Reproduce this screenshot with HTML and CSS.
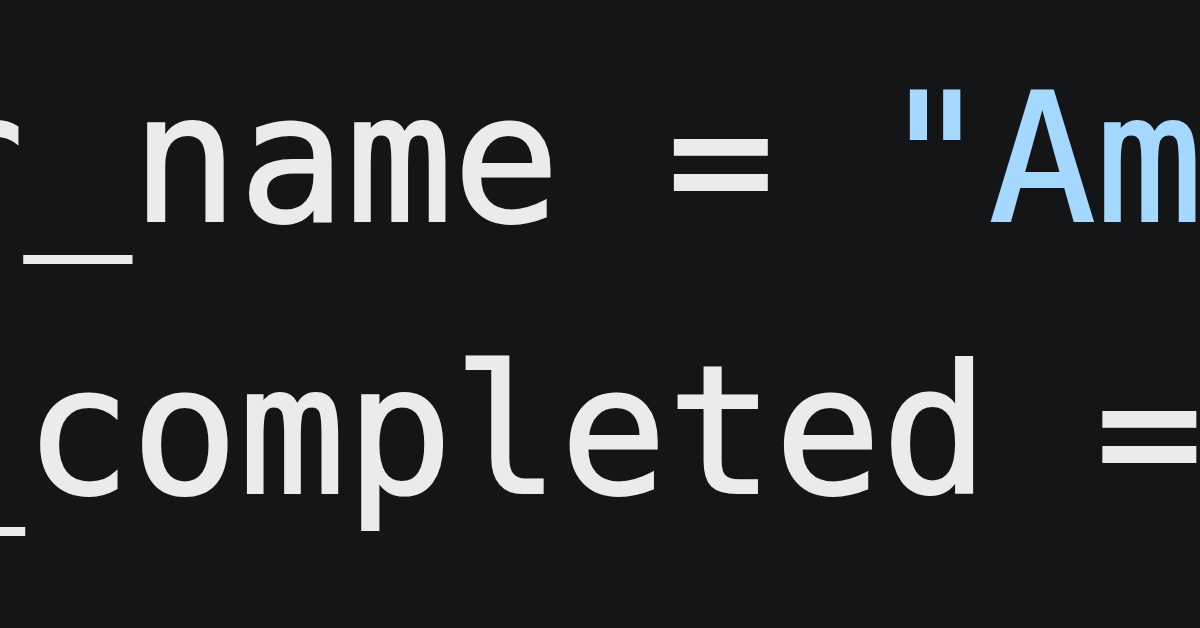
FILE: index.html
```html
<!DOCTYPE html>
<html lang="en">
<head>
<meta charset="utf-8">
<title>Code</title>
<link rel="stylesheet" href="styles.css">
</head>
<body>
<main class="editor">
  <div class="code">
    <div class="line"><span class="ident">r_name</span> <span class="op">=</span> <span class="str">"Amy"</span></div>
    <div class="line"><span class="ident">_completed</span> <span class="op">=</span> <span class="kw">True</span></div>
  </div>
</main>
</body>
</html>
```
FILE: styles.css
```css
html, body {
  margin: 0;
  padding: 0;
  width: 1200px;
  height: 628px;
  overflow: hidden;
  background: #141517;
}
.editor {
  width: 1200px;
  height: 628px;
  overflow: hidden;
  background: #141517;
  padding-top: 24px;
  box-sizing: border-box;
}
.code {
  margin-left: -83px;
  font-family: "DejaVu Sans Mono", "Liberation Mono", monospace;
  font-size: 178px;
  line-height: 272px;
  color: #ebebeb;
  -webkit-text-stroke: 2px #ebebeb;
}
.line {
  white-space: pre;
}
.str {
  color: #a5d8ff;
  -webkit-text-stroke: 2px #a5d8ff;
}
.kw {
  color: #ff7b72;
  -webkit-text-stroke: 2px #ff7b72;
}
```
